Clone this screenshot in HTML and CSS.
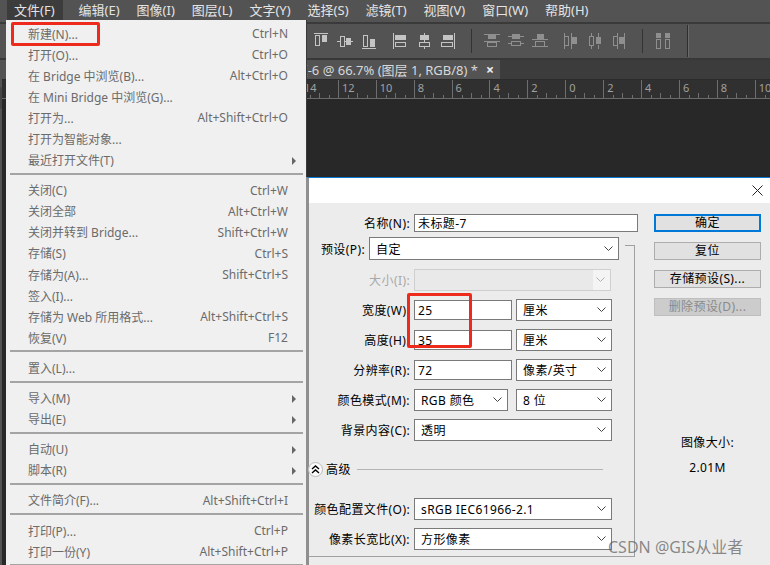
FILE: index.html
```html
<!DOCTYPE html>
<html lang="zh-CN">
<head>
    <meta charset="UTF-8">
    <title>Photoshop 新建</title>
    <link rel="stylesheet" href="styles.css">
</head>
<body>
    <svg class="icon-defs" aria-hidden="true">
        <symbol id="align-top" viewBox="0 0 16 16"><path d="M1 .5h14" stroke="currentColor" fill="none"/><rect x="2.5" y="2.5" width="4" height="10" stroke="currentColor" fill="none"/><rect x="9" y="2" width="5" height="7" fill="currentColor"/></symbol>
        <symbol id="align-middle" viewBox="0 0 16 16"><path d="M0 8.5h3M8 8.5h1M14 8.5h2" stroke="currentColor" fill="none"/><rect x="3.5" y="3.5" width="4" height="10" stroke="currentColor" fill="none"/><rect x="9" y="5" width="5" height="7" fill="currentColor"/></symbol>
        <symbol id="align-bottom" viewBox="0 0 16 16"><path d="M1 15.5h14" stroke="currentColor" fill="none"/><rect x="2.5" y="2.5" width="4" height="11" stroke="currentColor" fill="none"/><rect x="9" y="6" width="5" height="8" fill="currentColor"/></symbol>
        <symbol id="align-left" viewBox="0 0 16 16"><path d="M1.5 0v16" stroke="currentColor" fill="none"/><rect x="3" y="2" width="11" height="5" fill="currentColor"/><rect x="3.5" y="9.5" width="10" height="4" stroke="currentColor" fill="none"/></symbol>
        <symbol id="align-center" viewBox="0 0 16 16"><path d="M8.5 0v2M8.5 7v2M8.5 14v2" stroke="currentColor" fill="none"/><rect x="4" y="2" width="9" height="5" fill="currentColor"/><rect x="3.5" y="9.5" width="10" height="4" stroke="currentColor" fill="none"/></symbol>
        <symbol id="align-right" viewBox="0 0 16 16"><path d="M14.5 0v16" stroke="currentColor" fill="none"/><rect x="3" y="2" width="10" height="5" fill="currentColor"/><rect x="1.5" y="9.5" width="11" height="4" stroke="currentColor" fill="none"/></symbol>
        <symbol id="dist-top" viewBox="0 0 16 16"><path d="M0 1.500h16M0 8.500h16" stroke="currentColor" fill="none"/><rect x="4" y="2" width="8" height="4" fill="currentColor"/><rect x="3.500" y="9.500" width="9" height="4" stroke="currentColor" fill="none"/></symbol>
        <symbol id="dist-middle" viewBox="0 0 16 16"><path d="M0 3.500h4M12 3.500h4M0 10.500h3M13 10.500h3" stroke="currentColor" fill="none"/><rect x="4" y="1" width="8" height="5" fill="currentColor"/><rect x="3.500" y="8.500" width="9" height="4" stroke="currentColor" fill="none"/></symbol>
        <symbol id="dist-bottom" viewBox="0 0 16 16"><path d="M0 6.500h16M0 13.500h16" stroke="currentColor" fill="none"/><rect x="5" y="1" width="7" height="5" fill="currentColor"/><rect x="3.500" y="8.500" width="9" height="5" stroke="currentColor" fill="none"/></symbol>
        <symbol id="dist-left" viewBox="0 0 16 16"><path d="M1.500 0v16M8.500 0v16" stroke="currentColor" fill="none"/><rect x="1.500" y="3.500" width="4" height="9" stroke="currentColor" fill="none"/><rect x="9" y="4" width="5" height="7" fill="currentColor"/></symbol>
        <symbol id="dist-center" viewBox="0 0 16 16"><path d="M4.500 0v3M4.500 13v3M11.500 0v4M11.500 12v4" stroke="currentColor" fill="none"/><rect x="2.500" y="3.500" width="4" height="9" stroke="currentColor" fill="none"/><rect x="9" y="4" width="5" height="7" fill="currentColor"/></symbol>
        <symbol id="dist-right" viewBox="0 0 16 16"><path d="M6.500 0v16M13.500 0v16" stroke="currentColor" fill="none"/><rect x="2.500" y="3.500" width="4" height="9" stroke="currentColor" fill="none"/><rect x="8" y="4" width="5" height="7" fill="currentColor"/></symbol>
        <symbol id="dist-space" viewBox="0 0 16 16"><rect x="1" y="0" width="5" height="5" fill="currentColor"/><rect x="10" y="0" width="5" height="5" fill="currentColor"/><rect x="1.500" y="6.500" width="4" height="9" stroke="currentColor" fill="none"/><rect x="10.500" y="6.500" width="4" height="9" stroke="currentColor" fill="none"/></symbol>
        <symbol id="chevron" viewBox="0 0 9 5"><path d="M.5 .5l4 4 4-4" stroke="currentColor" fill="none"/></symbol>
    </svg>

    <div class="app">
        <nav class="menubar">
            <span class="menubar__item menubar__item--open">文件(F)</span>
            <span class="menubar__item">编辑(E)</span>
            <span class="menubar__item">图像(I)</span>
            <span class="menubar__item">图层(L)</span>
            <span class="menubar__item">文字(Y)</span>
            <span class="menubar__item">选择(S)</span>
            <span class="menubar__item">滤镜(T)</span>
            <span class="menubar__item">视图(V)</span>
            <span class="menubar__item">窗口(W)</span>
            <span class="menubar__item">帮助(H)</span>
        </nav>

        <div class="options">
            <div class="options__group">
                <svg class="tool"><use href="#align-top"/></svg>
                <svg class="tool"><use href="#align-middle"/></svg>
                <svg class="tool"><use href="#align-bottom"/></svg>
            </div>
            <div class="options__group">
                <svg class="tool"><use href="#align-left"/></svg>
                <svg class="tool"><use href="#align-center"/></svg>
                <svg class="tool"><use href="#align-right"/></svg>
            </div>
            <span class="options__sep"></span>
            <div class="options__group options__group--dim">
                <svg class="tool"><use href="#dist-top"/></svg>
                <svg class="tool"><use href="#dist-middle"/></svg>
                <svg class="tool"><use href="#dist-bottom"/></svg>
            </div>
            <div class="options__group options__group--dim">
                <svg class="tool"><use href="#dist-left"/></svg>
                <svg class="tool"><use href="#dist-center"/></svg>
                <svg class="tool"><use href="#dist-right"/></svg>
            </div>
            <span class="options__sep"></span>
            <div class="options__group options__group--dim">
                <svg class="tool"><use href="#dist-space"/></svg>
            </div>
            <span class="options__sep options__sep--light"></span>
        </div>

        <div class="work">
            <div class="tools"><span class="tools__btn"></span></div>
            <div class="doc">
                <div class="tabs">
                    <div class="tab">未标题-6 @ 66.7% (图层 1, RGB/8) *<span class="tab__close">×</span></div>
                </div>
                <div class="ruler">
                    <span class="ruler__cell">14</span>
                    <span class="ruler__cell">12</span>
                    <span class="ruler__cell">10</span>
                    <span class="ruler__cell">8</span>
                    <span class="ruler__cell">6</span>
                    <span class="ruler__cell">4</span>
                    <span class="ruler__cell">2</span>
                    <span class="ruler__cell">0</span>
                    <span class="ruler__cell">2</span>
                    <span class="ruler__cell">4</span>
                    <span class="ruler__cell">6</span>
                    <span class="ruler__cell">8</span>
                    <span class="ruler__cell">10</span>
                </div>
                <div class="canvas"></div>
            </div>
        </div>
    </div>

    <!-- File menu -->
    <div class="menu">
        <div class="menu__item"><span>新建(N)...</span><span>Ctrl+N</span></div>
        <div class="menu__item"><span>打开(O)...</span><span>Ctrl+O</span></div>
        <div class="menu__item"><span>在 Bridge 中浏览(B)...</span><span>Alt+Ctrl+O</span></div>
        <div class="menu__item"><span>在 Mini Bridge 中浏览(G)...</span></div>
        <div class="menu__item"><span>打开为...</span><span>Alt+Shift+Ctrl+O</span></div>
        <div class="menu__item"><span>打开为智能对象...</span></div>
        <div class="menu__item"><span>最近打开文件(T)</span><i class="menu__arrow"></i></div>
        <div class="menu__sep"></div>
        <div class="menu__item"><span>关闭(C)</span><span>Ctrl+W</span></div>
        <div class="menu__item"><span>关闭全部</span><span>Alt+Ctrl+W</span></div>
        <div class="menu__item"><span>关闭并转到 Bridge...</span><span>Shift+Ctrl+W</span></div>
        <div class="menu__item"><span>存储(S)</span><span>Ctrl+S</span></div>
        <div class="menu__item"><span>存储为(A)...</span><span>Shift+Ctrl+S</span></div>
        <div class="menu__item"><span>签入(I)...</span></div>
        <div class="menu__item"><span>存储为 Web 所用格式...</span><span>Alt+Shift+Ctrl+S</span></div>
        <div class="menu__item"><span>恢复(V)</span><span>F12</span></div>
        <div class="menu__sep"></div>
        <div class="menu__item"><span>置入(L)...</span></div>
        <div class="menu__sep"></div>
        <div class="menu__item"><span>导入(M)</span><i class="menu__arrow"></i></div>
        <div class="menu__item"><span>导出(E)</span><i class="menu__arrow"></i></div>
        <div class="menu__sep"></div>
        <div class="menu__item"><span>自动(U)</span><i class="menu__arrow"></i></div>
        <div class="menu__item"><span>脚本(R)</span><i class="menu__arrow"></i></div>
        <div class="menu__sep"></div>
        <div class="menu__item"><span>文件简介(F)...</span><span>Alt+Shift+Ctrl+I</span></div>
        <div class="menu__sep"></div>
        <div class="menu__item"><span>打印(P)...</span><span>Ctrl+P</span></div>
        <div class="menu__item"><span>打印一份(Y)</span><span>Alt+Shift+Ctrl+P</span></div>
        <div class="menu__sep"></div>
    </div>

    <!-- New document dialog -->
    <div class="dialog">
        <div class="dialog__title">
            <svg class="dialog__close" viewBox="0 0 11 11"><path d="M.5 .5l10 10M10.500 .5l-10 10" stroke="currentColor" fill="none"/></svg>
        </div>
        <div class="dialog__body">
            <div class="form">
                <div class="row row--name">
                    <label class="row__label">名称(N):</label>
                    <div class="field field--name">未标题-7</div>
                </div>
                <div class="frame">
                    <div class="row row--preset">
                        <label class="row__label row__label--short">预设(P):</label>
                        <div class="select select--preset">自定<svg class="chevron"><use href="#chevron"/></svg></div>
                    </div>
                    <div class="row row--size">
                        <label class="row__label row__label--off">大小(I):</label>
                        <div class="select select--off"><span class="select__well"></span><svg class="chevron"><use href="#chevron"/></svg></div>
                    </div>
                    <div class="row">
                        <label class="row__label">宽度(W):</label>
                        <div class="field field--num">25</div>
                        <div class="select select--unit">厘米<svg class="chevron"><use href="#chevron"/></svg></div>
                    </div>
                    <div class="row">
                        <label class="row__label">高度(H):</label>
                        <div class="field field--num">35</div>
                        <div class="select select--unit">厘米<svg class="chevron"><use href="#chevron"/></svg></div>
                    </div>
                    <div class="row">
                        <label class="row__label">分辨率(R):</label>
                        <div class="field field--num">72</div>
                        <div class="select select--unit">像素/英寸<svg class="chevron"><use href="#chevron"/></svg></div>
                    </div>
                    <div class="row">
                        <label class="row__label">颜色模式(M):</label>
                        <div class="select select--mode">RGB 颜色<svg class="chevron"><use href="#chevron"/></svg></div>
                        <div class="select select--depth">8 位<svg class="chevron"><use href="#chevron"/></svg></div>
                    </div>
                    <div class="row">
                        <label class="row__label">背景内容(C):</label>
                        <div class="select select--wide">透明<svg class="chevron"><use href="#chevron"/></svg></div>
                    </div>
                    <div class="advanced">
                        <span class="advanced__toggle"><svg viewBox="0 0 9 9"><path d="M1 4l3.500-3 3.500 3M1 8l3.500-3 3.500 3" stroke="currentColor" stroke-width="1.400" fill="none"/></svg></span>
                        <span class="advanced__text">高级</span>
                        <span class="advanced__line"></span>
                    </div>
                    <div class="row">
                        <label class="row__label">颜色配置文件(O):</label>
                        <div class="select select--wide">sRGB IEC61966-2.1<svg class="chevron"><use href="#chevron"/></svg></div>
                    </div>
                    <div class="row">
                        <label class="row__label">像素长宽比(X):</label>
                        <div class="select select--wide">方形像素<svg class="chevron"><use href="#chevron"/></svg></div>
                    </div>
                </div>
            </div>
            <div class="side">
                <button class="btn btn--primary">确定</button>
                <button class="btn">复位</button>
                <button class="btn">存储预设(S)...</button>
                <button class="btn btn--off">删除预设(D)...</button>
                <div class="side__info">图像大小:</div>
                <div class="side__size">2.01M</div>
            </div>
        </div>
    </div>

    <!-- annotations drawn over the screenshot -->
    <div class="mark mark--new"></div>
    <div class="mark mark--size"></div>
    <div class="watermark">CSDN @GIS从业者</div>
</body>
</html>
```

FILE: styles.css
```css
/* Global Styles */
html, body {
    margin: 0;
    padding: 0;
    height: 100%;
    overflow: hidden;
    background: #282828;
    font-family: "Noto Sans", "Noto Sans CJK SC", sans-serif;
    font-size: 12px;
}

.icon-defs {
    display: none;
}

.app {
    display: flex;
    flex-direction: column;
    height: 565px;
}

/* Menu bar */
.menubar {
    display: flex;
    gap: 15px;
    height: 24px;
    padding-left: 7px;
    box-sizing: border-box;
    background: #535353;
    border-bottom: 2px solid #3a3a3a;
    color: #e4e4e4;
    font-size: 13px;
    line-height: 18px;
}

.menubar__item {
    padding: 1px 1px 0;
    height: 19px;
}

.menubar__item--open {
    background: #3c3c3c;
    padding: 1px 8px 0 7px;
    margin-right: 0;
}

/* Options bar */
.options {
    display: flex;
    align-items: center;
    height: 34px;
    padding-left: 313px;
    background: #535353;
    border-bottom: 2px solid #383838;
    color: #c4c4c4;
}

.options__group {
    display: flex;
    gap: 8px;
    margin-right: 15px;
}

.options__group--dim {
    color: #8f8f8f;
}

.options__sep {
    width: 1px;
    height: 24px;
    background: #333;
    margin-right: 12px;
}

.options__sep--light {
    height: 32px;
    margin-left: 1px;
    background: #2e2e2e;
    border-right: 1px solid #6a6a6a;
}

.tool {
    width: 16px;
    height: 16px;
}

/* Document area */
.work {
    display: flex;
    flex: 1;
}

.tools {
    width: 6px;
    padding-top: 27px;
    background: #535353;
}

.tools__btn {
    display: block;
    width: 2px;
    height: 22px;
    background: #454545;
    border-radius: 0 2px 2px 0;
}

.doc {
    flex: 1;
    display: flex;
    flex-direction: column;
}

.tabs {
    height: 19px;
    background: #3c3c3c;
    border-bottom: 1px solid #2b2b2b;
}

.tab {
    display: flex;
    align-items: center;
    justify-content: flex-end;
    width: 498px;
    height: 19px;
    padding-right: 6px;
    box-sizing: border-box;
    background: #535353;
    color: #d8d8d8;
    font-size: 13px;
    white-space: nowrap;
}

.tab__close {
    margin-left: 8px;
    color: #eee;
    font-size: 14px;
    font-weight: bold;
}

.ruler {
    display: flex;
    height: 18px;
    padding-left: 298px;
    background: #303030;
    border-bottom: 1px solid #6a6a6a;
}

.ruler__cell {
    flex: 0 0 37.9px;
    box-sizing: border-box;
    padding: 0 0 0 3px;
    border-left: 1px solid #6e6e6e;
    color: #a0a0a0;
    font-size: 11px;
    line-height: 15px;
    background:
        linear-gradient(#6e6e6e, #6e6e6e) 9px 100% / 1px 3px no-repeat,
        linear-gradient(#6e6e6e, #6e6e6e) 18px 100% / 1px 5px no-repeat,
        linear-gradient(#6e6e6e, #6e6e6e) 28px 100% / 1px 3px no-repeat;
}

.canvas {
    flex: 1;
    background: #282828;
}

/* File menu */
.menu {
    position: absolute;
    left: 6px;
    top: 20px;
    width: 300px;
    padding-top: 3px;
    background: #f0f0f0;
    color: #6b6b6b;
    box-shadow: 1px 0 0 #3a3a3a;
}

.menu__item {
    display: flex;
    align-items: center;
    justify-content: space-between;
    position: relative;
    height: 21.1px;
    padding: 0 18px 0 22px;
    white-space: nowrap;
}

.menu__arrow {
    position: absolute;
    right: 10px;
    top: 7px;
    border-left: 4px solid #666;
    border-top: 4px solid transparent;
    border-bottom: 4px solid transparent;
}

.menu__sep {
    height: 2px;
    margin: 2px 3px 5px 4px;
    background: #a4a4a4;
}

/* New document dialog */
.dialog {
    position: absolute;
    left: 306px;
    top: 177px;
    right: 0;
    bottom: 0;
    display: flex;
    flex-direction: column;
    border-top: 1px solid #0a78d4;
    border-left: 3px solid #8f8f8f;
    background: #ececec;
    color: #000;
    letter-spacing: 0.4px;
}

.dialog__title {
    display: flex;
    justify-content: flex-end;
    flex: 0 0 25px;
    padding: 7px 7px 0 0;
    box-sizing: border-box;
    background: #fff;
}

.dialog__close {
    width: 11px;
    height: 11px;
    color: #222;
}

.dialog__body {
    display: flex;
    flex: 1;
}

.form {
    width: 329px;
    padding-top: 11px;
}

.row {
    display: flex;
    align-items: center;
    gap: 4px;
    height: 22px;
    margin-top: 8px;
}

.row--name {
    height: 18px;
    margin-top: 0;
    margin-bottom: 5px;
}

.row--preset {
    height: 23px;
    margin-top: 0;
}

.row--size {
    margin-top: 9px;
}

.row__label {
    flex: 0 0 101px;
    text-align: right;
    white-space: nowrap;
}

.row__label--short {
    flex-basis: 56px;
    margin-left: 0;
}

.row__label--off {
    color: #a8a8a8;
}

.field, .select {
    box-sizing: border-box;
    background: #fff;
    border: 1px solid #7a7a7a;
    display: flex;
    align-items: center;
    flex-shrink: 0;
    white-space: nowrap;
}

.field {
    padding-left: 3px;
}

.field--name {
    width: 224px;
    height: 18px;
}

.field--num {
    width: 98px;
    height: 20px;
}

.select {
    position: relative;
    height: 22px;
    padding-left: 6px;
}

.select--preset {
    width: 250px;
    height: 23px;
}

.select--off {
    width: 197px;
    background: #e9e9e9;
    border-color: #cfcfcf;
    margin-left: 0;
}

.select__well {
    position: absolute;
    top: 0;
    bottom: 0;
    right: 0;
    width: 17px;
    background: #f4f4f4;
}

.select--off .chevron {
    color: #b0b0b0;
}

.select--unit, .select--depth {
    width: 96px;
}

.select--mode {
    width: 94px;
}

.select--depth {
    margin-left: 4px;
}

.select--wide {
    width: 198px;
}

.chevron {
    position: absolute;
    right: 5px;
    top: 50%;
    width: 9px;
    height: 5px;
    margin-top: -3px;
    color: #444;
}

/* Frame around the settings */
.frame {
    position: relative;
    margin-right: 3px;
    padding-bottom: 6px;
    border-bottom: 1px solid #a0a0a0;
}

.frame::after {
    content: "";
    position: absolute;
    top: 8px;
    right: 0;
    bottom: 0;
    width: 9px;
    border-top: 1px solid #a0a0a0;
    border-right: 1px solid #a0a0a0;
}

.advanced {
    display: flex;
    align-items: center;
    height: 16px;
    margin: 20px 0 21px;
}

.advanced__toggle {
    display: flex;
    align-items: center;
    justify-content: center;
    width: 13px;
    height: 13px;
    margin-left: -1px;
    border: 1px solid #bbb;
    border-radius: 50%;
    background: #fafafa;
}

.advanced__toggle svg {
    width: 9px;
    height: 9px;
}

.advanced__text {
    margin-left: 3px;
}

.advanced__line {
    width: 246px;
    height: 1px;
    margin-left: 6px;
    background: #b4b4b4;
}

/* Buttons on the right */
.side {
    display: flex;
    flex-direction: column;
    align-items: center;
    gap: 10px;
    width: 107px;
    margin-left: 16px;
    padding-top: 11px;
}

.btn {
    box-sizing: border-box;
    width: 107px;
    height: 18px;
    padding: 0;
    border: 1px solid #adadad;
    background: #e1e1e1;
    color: #000;
    font: inherit;
    letter-spacing: inherit;
    line-height: 14px;
}

.btn--primary {
    border: 2px solid #0078d7;
}

.btn--off {
    background: #cccccc;
    border-color: #bfbfbf;
    color: #8a8a8a;
}

.side__info {
    margin-top: 107px;
}

.side__size {
    margin-top: -2px;
}

/* Annotations */
.mark {
    position: absolute;
    box-sizing: border-box;
    border: 3px solid #ee2a1c;
    border-radius: 2px;
}

.mark--new {
    left: 11px;
    top: 22px;
    width: 89px;
    height: 24px;
}

.mark--size {
    left: 407px;
    top: 293px;
    width: 65px;
    height: 55px;
}

.watermark {
    position: absolute;
    left: 608px;
    top: 536px;
    color: rgba(90, 90, 90, 0.7);
    font-size: 16px;
    line-height: 22px;
    white-space: nowrap;
}
```
